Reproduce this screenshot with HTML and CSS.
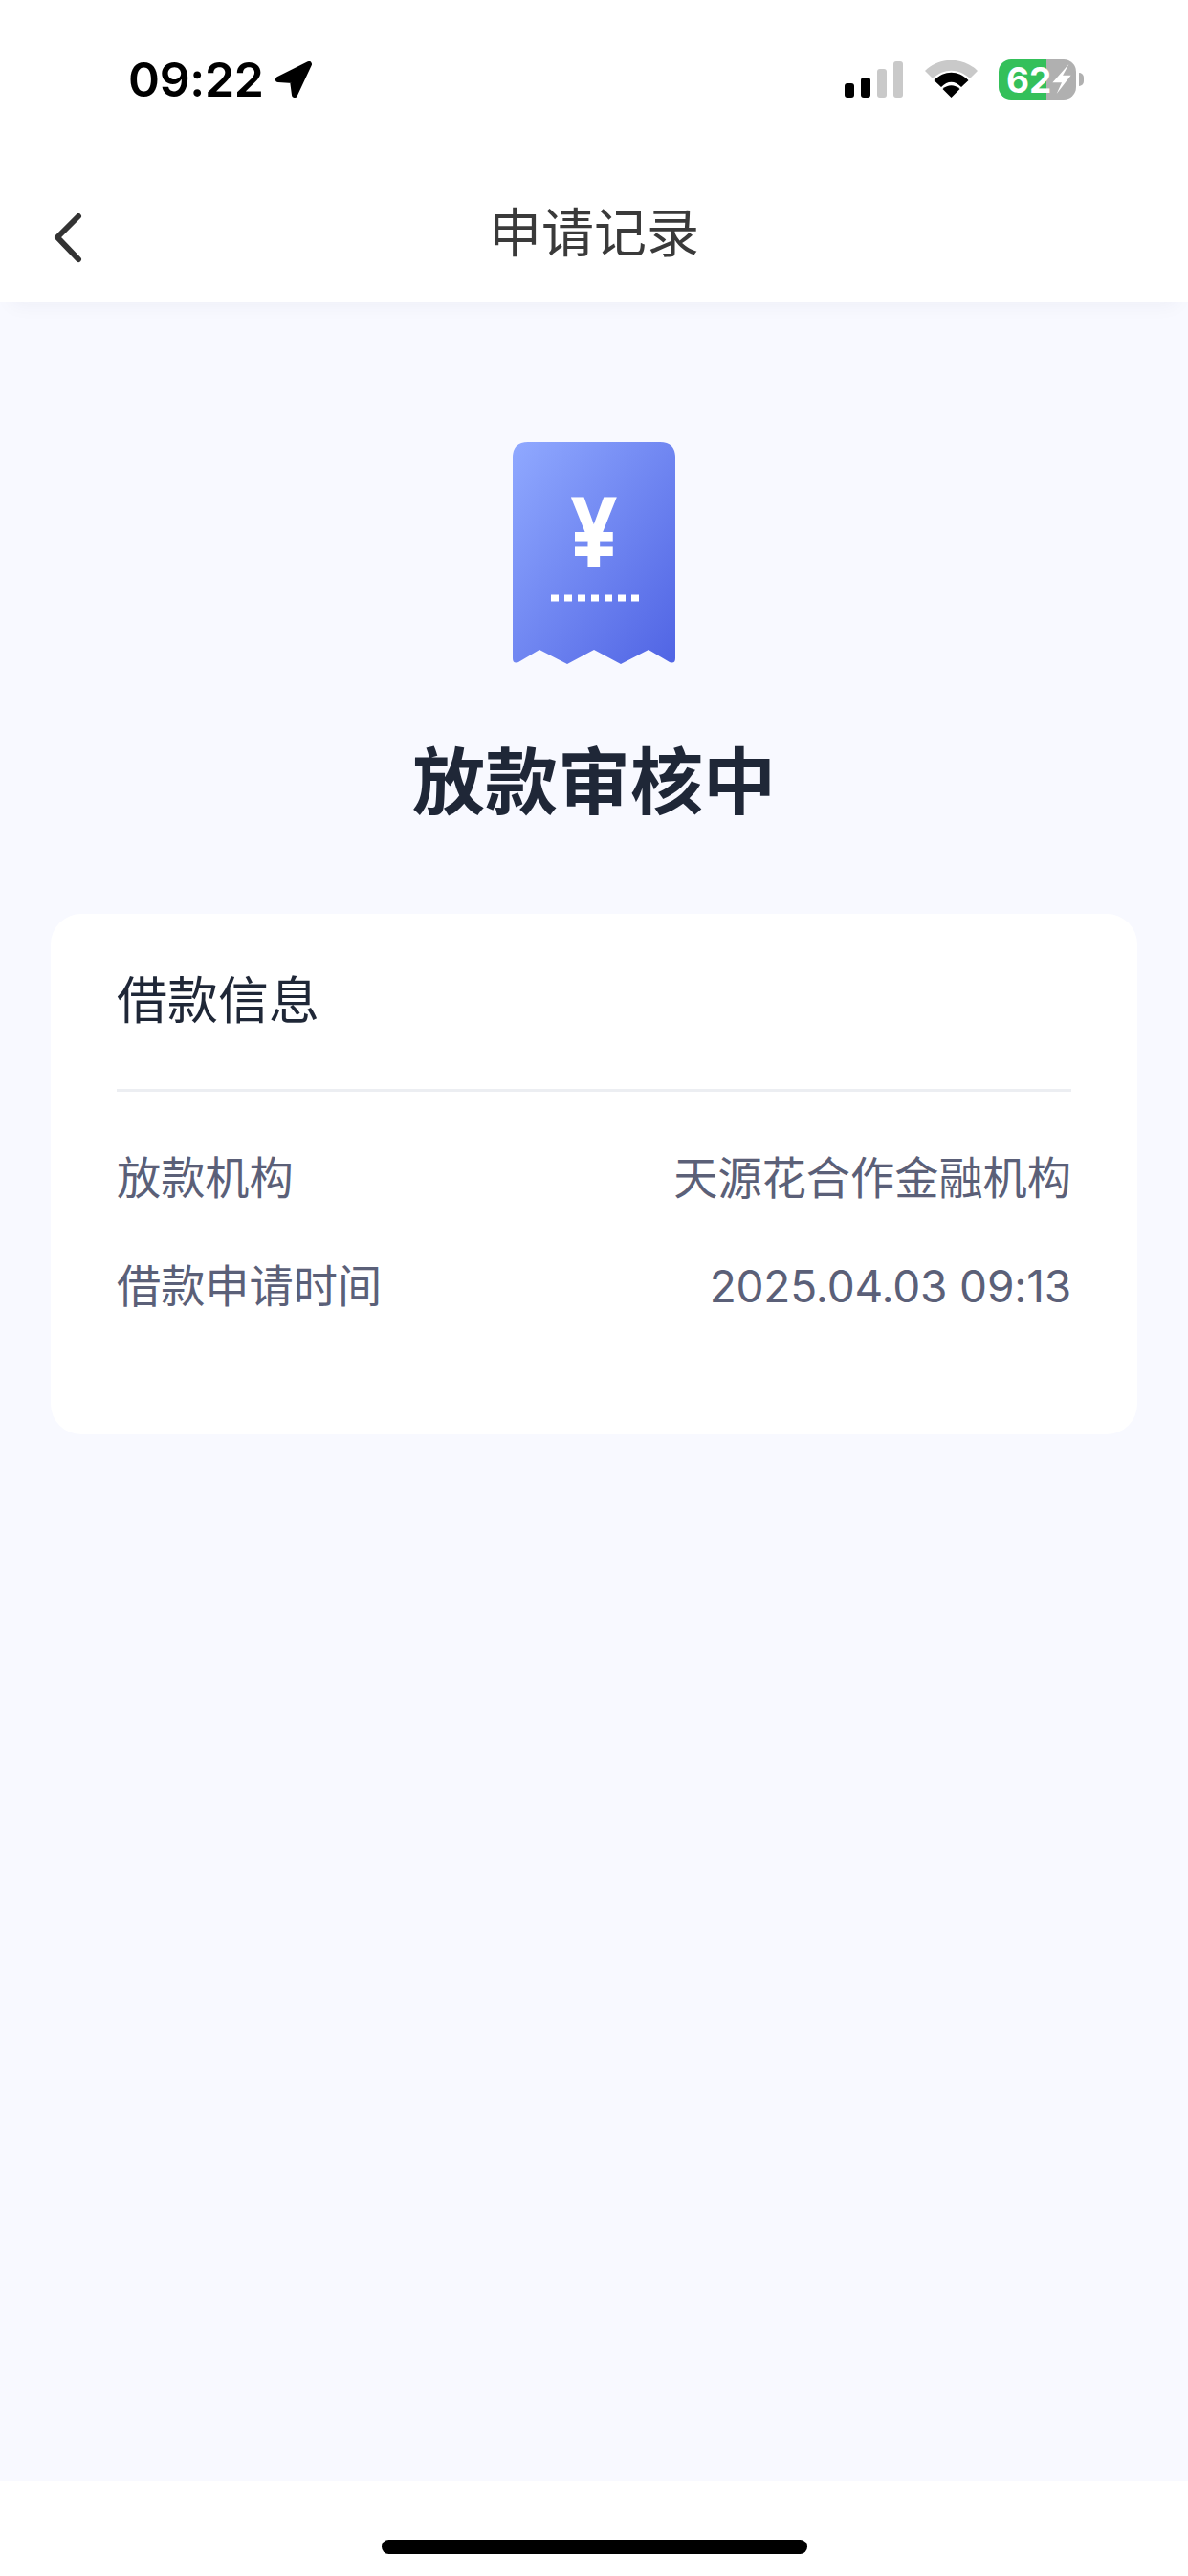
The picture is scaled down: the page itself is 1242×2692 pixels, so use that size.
FILE: index.html
```html
<!DOCTYPE html>
<html lang="zh-CN">
<head>
  <meta charset="UTF-8" />
  <title>申请记录</title>
  <link rel="stylesheet" href="styles.css">
</head>
<body>

<div class="page">
  <!-- Status bar -->
  <div class="status-bar">
    <div class="status-left">
      <span class="clock">09:22</span>
      <svg class="location" viewBox="0 0 40 39"><path d="M4 19 L36 3 L21 35 L19 20 Z" /></svg>
    </div>
    <div class="status-right">
      <div class="signal">
        <span class="bar bar-1"></span>
        <span class="bar bar-2"></span>
        <span class="bar bar-3 off"></span>
        <span class="bar bar-4 off"></span>
      </div>
      <svg class="wifi" viewBox="0 0 55 40">
        <path fill="#c9c9c9" d="M0 11 C15 -4 40 -4 55 11 L47 19 C35 8 20 8 8 19 Z" />
        <path fill="#000" d="M9.5 21 C20 10 35 10 45.500 21 L38 28 C31 21 24 21 17 28 Z" />
        <path fill="#000" d="M18.500 30 C24 25 31 25 36.500 30 L27.500 39 Z" />
      </svg>
      <div class="battery">
        <div class="battery-body">
          <span class="battery-num">62</span>
          <svg class="bolt" viewBox="0 0 18 30"><path d="M16 0 L0 18 L9 18 L4 29 L18 11 L10 11 Z" /></svg>
        </div>
        <span class="battery-tip"></span>
      </div>
    </div>
  </div>

  <!-- Nav -->
  <div class="nav">
    <svg class="back" viewBox="0 0 30 52"><path d="M26 3 L4 25 L26 48" /></svg>
    <div class="nav-title">申请记录</div>
  </div>

  <!-- Content -->
  <div class="content">
    <svg class="receipt" viewBox="0 0 170 232">
      <defs>
        <linearGradient id="receipt-fill" x1="0" y1="0" x2="1" y2="1">
          <stop offset="0" stop-color="#90a9ff" />
          <stop offset="1" stop-color="#5064e4" />
        </linearGradient>
      </defs>
      <path fill="url(#receipt-fill)" d="M16 0 H154 Q170 0 170 16 V226 Q170 232 164 230 L142 217 L113 232 L85 217 L57 232 L28 217 L6 230 Q0 232 0 226 V16 Q0 0 16 0 Z" />
      <text class="yen" transform="translate(85 130) scale(0.84 1.06)" text-anchor="middle">¥</text>
      <line class="dots" x1="40" y1="163" x2="134" y2="163" />
    </svg>
    <h1 class="status-title">放款审核中</h1>

    <div class="card">
      <div class="card-title">借款信息</div>
      <div class="card-rows">
        <div class="row"><span>放款机构</span><span>天源花合作金融机构</span></div>
        <div class="row"><span>借款申请时间</span><span class="row-time">2025.04.03 09:13</span></div>
      </div>
    </div>
  </div>

  <!-- Home bar -->
  <div class="footer">
    <div class="home-bar"></div>
  </div>
</div>

</body>
</html>
```

FILE: styles.css
```css
* {
  box-sizing: border-box;
}

html, body {
  margin: 0;
  padding: 0;
  width: 1242px;
  height: 2692px;
  overflow: hidden;
  background: #fff;
  font-family: Inter, "Noto Sans CJK SC", sans-serif;
}

.page {
  width: 100%;
  height: 100%;
  display: flex;
  flex-direction: column;
}

.status-bar {
  height: 166px;
  padding: 0 109px 0 134px;
  display: flex;
  justify-content: space-between;
  align-items: center;
  background: #fff;
}

.status-left {
  display: flex;
  align-items: center;
  gap: 11px;
}

.clock {
  font-size: 50px;
  font-weight: 600;
  line-height: 1;
  letter-spacing: -0.3px;
  color: #000;
}

.location {
  width: 40px;
  height: 39px;
}

.location path {
  fill: #000;
  stroke: #000;
  stroke-width: 6;
  stroke-linejoin: round;
}

.status-right {
  display: flex;
  align-items: center;
}

.signal {
  display: flex;
  align-items: flex-end;
  gap: 7px;
  height: 38px;
  margin-right: 23px;
}

.bar {
  width: 10px;
  border-radius: 3px;
  background: #000;
}

.bar-1 { height: 15px; }
.bar-2 { height: 21px; }
.bar-3 { height: 30px; }
.bar-4 { height: 38px; }

.bar.off {
  background: #c9c9c9;
}

.wifi {
  width: 55px;
  height: 40px;
  margin-right: 22px;
}

.battery {
  display: flex;
  align-items: center;
  gap: 3px;
}

.battery-body {
  width: 81px;
  height: 42px;
  border-radius: 13px;
  padding-left: 8px;
  display: flex;
  align-items: center;
  background: linear-gradient(90deg, #34c05a 0, #34c05a 50px, #b0b0b0 50px);
}

.battery-num {
  font-size: 37px;
  font-weight: 700;
  line-height: 1;
  color: #fff;
}

.bolt {
  width: 20px;
  height: 32px;
  margin-left: 1px;
  fill: #fff;
}

.battery-tip {
  width: 5px;
  height: 14px;
  border-radius: 0 5px 5px 0;
  background: #b0b0b0;
}

.nav {
  height: 150px;
  padding-left: 56px;
  position: relative;
  z-index: 1;
  display: flex;
  align-items: center;
  background: #fff;
  box-shadow: 0 14px 20px -12px rgba(30, 40, 80, 0.05);
}

.back {
  width: 30px;
  height: 52px;
  fill: none;
  stroke: #333;
  stroke-width: 6;
  stroke-linecap: round;
  stroke-linejoin: round;
  margin-top: 16px;
}

.nav-title {
  position: absolute;
  left: 0;
  right: 0;
  top: 43px;
  text-align: center;
  font-size: 55px;
  line-height: 68px;
  color: #3a3a3a;
}

.content {
  flex: 1;
  padding: 146px 53px 0;
  display: flex;
  flex-direction: column;
  align-items: center;
  background: #f8f9ff;
}

.receipt {
  width: 170px;
  height: 232px;
}

.yen {
  font-family: "Liberation Sans", sans-serif;
  font-size: 98px;
  font-weight: 700;
  fill: #fff;
  stroke: #fff;
  stroke-width: 2;
}

.dots {
  stroke: #fff;
  stroke-width: 7;
  stroke-dasharray: 8 6;
}

.status-title {
  margin: 73px 0 0;
  font-size: 76px;
  line-height: 100px;
  font-weight: 700;
  color: #1f2737;
}

.card {
  width: 100%;
  height: 544px;
  margin-top: 88px;
  padding: 0 69px;
  background: #fff;
  border-radius: 32px;
}

.card-title {
  height: 186px;
  padding-top: 58px;
  font-size: 53px;
  line-height: 66px;
  color: #1f2737;
  border-bottom: 3px solid #eceef2;
}

.card-rows {
  padding-top: 60px;
  display: flex;
  flex-direction: column;
  gap: 53px;
}

.row {
  display: flex;
  justify-content: space-between;
  font-size: 46.200px;
  line-height: 60px;
  color: #5b6078;
}

.row-time {
  font-size: 46px;
  letter-spacing: -0.2px;
}

.footer {
  height: 99px;
  padding-top: 61px;
  display: flex;
  justify-content: center;
  background: #fff;
}

.home-bar {
  width: 445px;
  height: 15px;
  border-radius: 8px;
  background: #000;
}
```
